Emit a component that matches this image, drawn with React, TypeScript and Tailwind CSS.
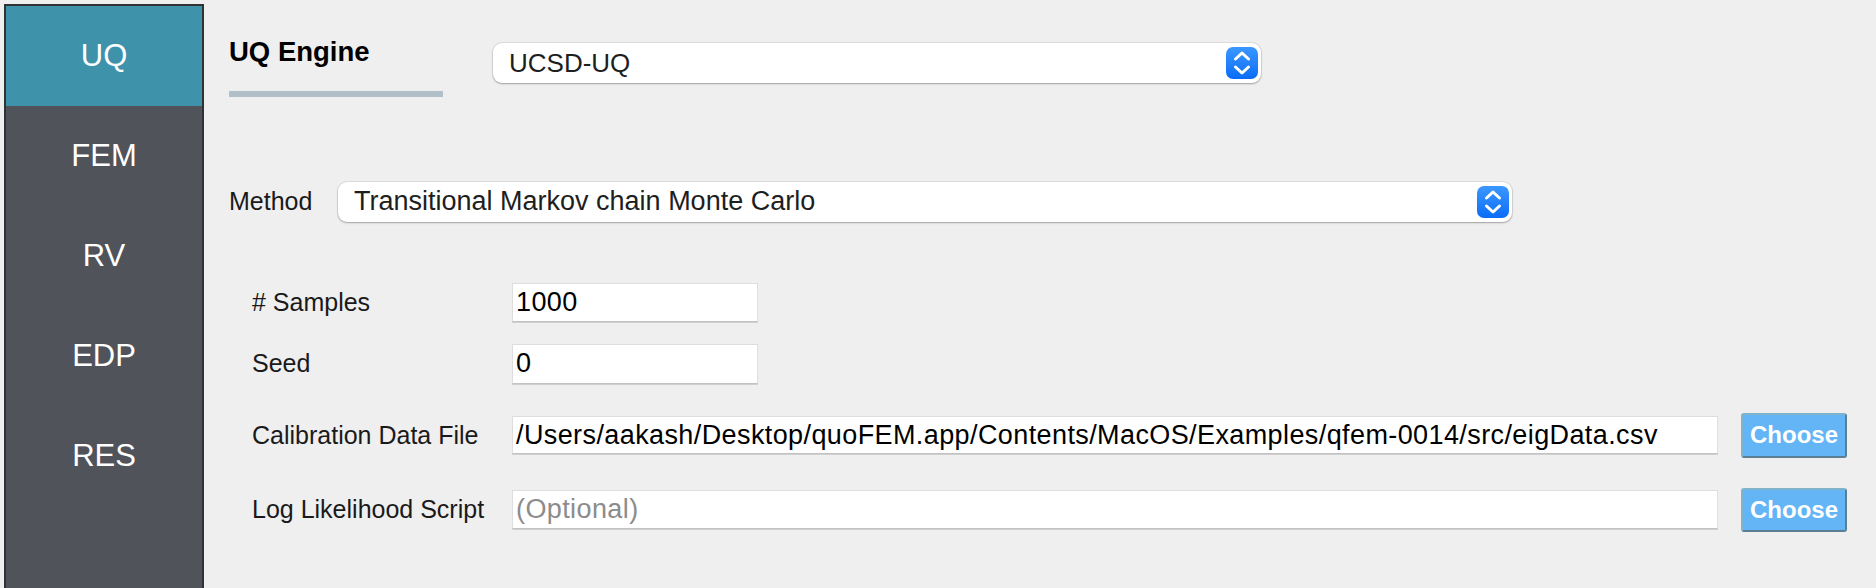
import React from "react";

const tabs = ["UQ", "FEM", "RV", "EDP", "RES"];

function Stepper() {
  return (
    <span className="flex h-[32px] w-[32px] items-center justify-center rounded-[7px] bg-gradient-to-b from-[#3b97ff] to-[#086cf6]">
      <svg width="32" height="32" viewBox="0 0 32 32" fill="none">
        <path d="M9.5 12 L16 6 L22.5 12" stroke="white" strokeWidth="3" strokeLinecap="round" strokeLinejoin="round" />
        <path d="M9.5 20 L16 26 L22.5 20" stroke="white" strokeWidth="3" strokeLinecap="round" strokeLinejoin="round" />
      </svg>
    </span>
  );
}

function Combo({ value, className, textSize }: { value: string; className: string; textSize: string }) {
  return (
    <div
      className={`flex h-[40px] items-center justify-between rounded-[9px] bg-white pl-[16px] pr-[3px] shadow-[0_0_0_1px_rgba(0,0,0,0.07),0_1px_2px_rgba(0,0,0,0.28)] ${className}`}
    >
      <span className={`${textSize} leading-none text-[#1e1e1e]`}>{value}</span>
      <Stepper />
    </div>
  );
}

function TextBox({
  value,
  placeholder,
  className,
}: {
  value?: string;
  placeholder?: string;
  className: string;
}) {
  return (
    <div
      className={`flex items-center border border-[#dedede] border-b-[#c2c2c2] bg-white pl-[3px] shadow-[0_1px_0_#d0d0d0] ${className}`}
    >
      {value ? (
        <span className="whitespace-nowrap text-[27px] leading-none tracking-[0.4px] text-black">{value}</span>
      ) : (
        <span className="whitespace-nowrap text-[27px] leading-none tracking-[0.4px] text-[#8c8c8c]">{placeholder}</span>
      )}
    </div>
  );
}

function ChooseButton() {
  return (
    <button className="flex h-full w-[106px] items-center justify-center rounded-[3px] border-2 border-[#7fb3cc] border-r-[#5b7f92] border-b-[#5b7f92] bg-[#63b5f5] text-[24px] font-bold leading-none text-white">
      Choose
    </button>
  );
}

function FormRow({
  label,
  className,
  children,
}: {
  label: string;
  className: string;
  children: React.ReactNode;
}) {
  return (
    <div className={`flex items-center pl-[23px] ${className}`}>
      <span className="w-[260px] shrink-0 text-[25px] leading-none text-[#1a1a1a]">{label}</span>
      {children}
    </div>
  );
}

export default function App() {
  return (
    <div
      className="flex h-[588px] w-[1876px] overflow-hidden bg-[#efefef]"
      style={{ fontFamily: '"Liberation Sans", Arial, sans-serif' }}
    >
      <nav className="ml-[4px] mt-[4px] flex w-[200px] shrink-0 flex-col border-2 border-b-0 border-[#303236] bg-[#50535a]">
        {tabs.map((tab, i) => (
          <div
            key={tab}
            className={`flex h-[100px] items-center justify-center text-[31px] text-white ${
              i === 0 ? "bg-[#3e92a9]" : ""
            }`}
          >
            {tab}
          </div>
        ))}
      </nav>

      <main className="flex flex-1 flex-col pl-[25px] pt-[38px]">
        <div className="flex items-start">
          <div className="flex w-[214px] flex-col">
            <span className="text-[27.5px] font-bold leading-none text-black">UQ Engine</span>
            <span className="mt-[25px] h-[6px] bg-[#b1c0c8]" />
          </div>
          <Combo value="UCSD-UQ" textSize="text-[26px]" className="ml-[50px] mt-[5px] w-[768px]" />
        </div>

        <div className="mt-[85px] flex h-[40px] items-center">
          <span className="w-[109px] text-[25px] leading-none text-[#1a1a1a]">Method</span>
          <Combo value="Transitional Markov chain Monte Carlo" textSize="text-[27px]" className="w-[1174px]" />
        </div>

        <FormRow label="# Samples" className="mt-[61px] h-[39px]">
          <TextBox value="1000" className="h-full w-[246px]" />
        </FormRow>
        <FormRow label="Seed" className="mt-[22px] h-[40px]">
          <TextBox value="0" className="h-full w-[246px]" />
        </FormRow>
        <FormRow label="Calibration Data File" className="mt-[29px] h-[45px]">
          <TextBox
            value="/Users/aakash/Desktop/quoFEM.app/Contents/MacOS/Examples/qfem-0014/src/eigData.csv"
            className="h-[38px] w-[1206px]"
          />
          <span className="ml-[23px] h-full">
            <ChooseButton />
          </span>
        </FormRow>
        <FormRow label="Log Likelihood Script" className="mt-[30px] h-[44px]">
          <TextBox placeholder="(Optional)" className="h-[39px] w-[1206px]" />
          <span className="ml-[23px] h-full">
            <ChooseButton />
          </span>
        </FormRow>
      </main>
    </div>
  );
}
